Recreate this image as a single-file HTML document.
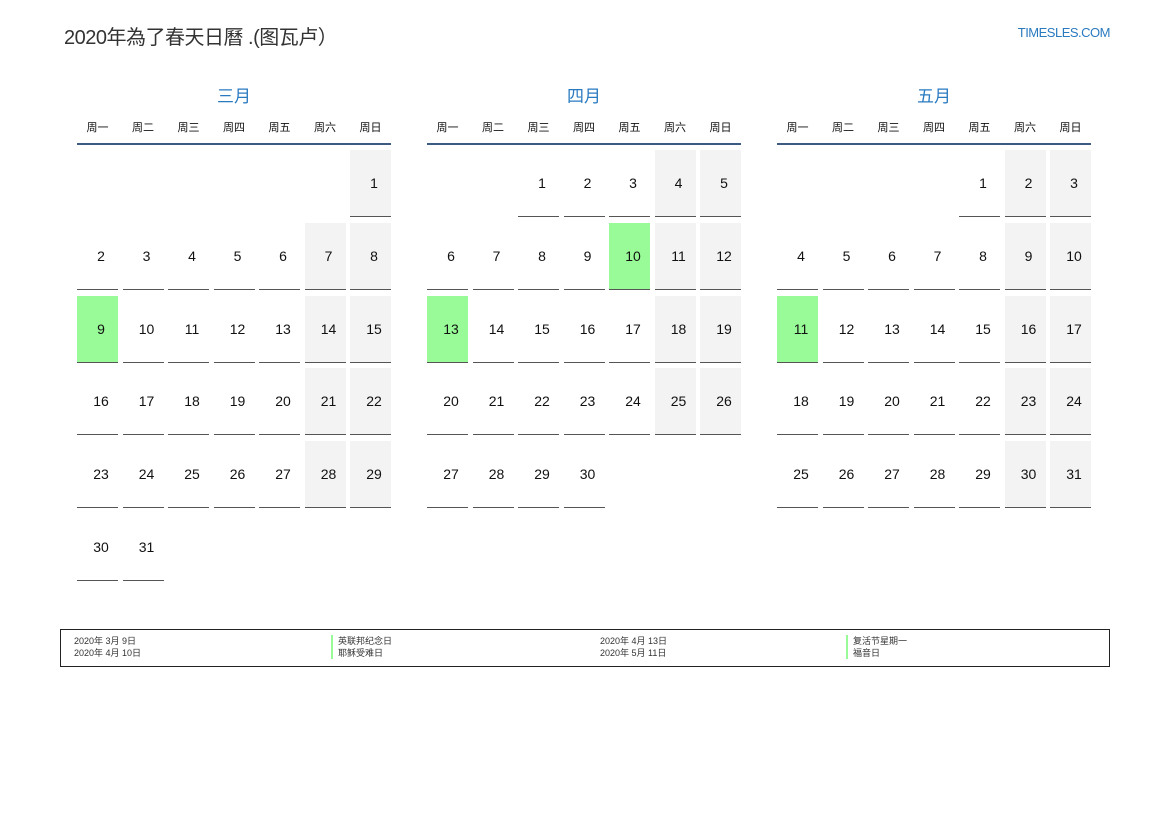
<!DOCTYPE html>
<html><head><meta charset="utf-8"><style>
*{margin:0;padding:0;box-sizing:border-box}
body{width:1169px;height:827px;background:#fff;position:relative;font-family:"Liberation Sans","Noto Sans CJK SC",sans-serif;color:#222;overflow:hidden}
.title{position:absolute;left:64px;top:21px;font-size:20px;color:#333;letter-spacing:-0.5px}
.site{position:absolute;right:59px;top:25px;font-size:13px;color:#2a7ac0;letter-spacing:-0.5px}
.m{position:absolute;top:85px;width:314px}
.mt{text-align:center;font-size:17px;color:#2a7ac0;height:24px;line-height:24px}
.wd{display:grid;grid-template-columns:repeat(7,41px);column-gap:4.5px;margin-top:9px;font-size:11px;text-align:center;height:25px;line-height:20px;color:#111}
.hl{height:2px;background:#3d5a80;margin-top:0px}
.g{display:grid;grid-template-columns:repeat(7,41px);grid-auto-rows:67px;column-gap:4.5px;row-gap:5.8px;margin-top:5px}
.g div{font-size:14px;text-align:center;line-height:66px;border-bottom:1px solid #555;color:#111;padding-left:7px}
.g div.e{border:none}
.g div.w{background:#f3f3f3}
.g div.h{background:#98fb98}
.leg{position:absolute;left:60px;top:629px;width:1050px;height:38px;border:1px solid #222;font-size:9px;color:#333}
.leg span{position:absolute;line-height:12px}
.bar{border-left:2px solid #98fb98;padding-left:5px}
</style></head><body>
<div class="title">2020年為了春天日曆 .(图瓦卢）</div>
<div class="site">TIMESLES.COM</div>

<div class="m" style="left:77px"><div class="mt">三月</div>
<div class="wd"><span>周一</span><span>周二</span><span>周三</span><span>周四</span><span>周五</span><span>周六</span><span>周日</span></div><div class="hl"></div>
<div class="g">
<div class="e"></div><div class="e"></div><div class="e"></div><div class="e"></div><div class="e"></div><div class="e"></div><div class="w">1</div>
<div>2</div><div>3</div><div>4</div><div>5</div><div>6</div><div class="w">7</div><div class="w">8</div>
<div class="h">9</div><div>10</div><div>11</div><div>12</div><div>13</div><div class="w">14</div><div class="w">15</div>
<div>16</div><div>17</div><div>18</div><div>19</div><div>20</div><div class="w">21</div><div class="w">22</div>
<div>23</div><div>24</div><div>25</div><div>26</div><div>27</div><div class="w">28</div><div class="w">29</div>
<div>30</div><div>31</div>
</div></div>

<div class="m" style="left:427px"><div class="mt">四月</div>
<div class="wd"><span>周一</span><span>周二</span><span>周三</span><span>周四</span><span>周五</span><span>周六</span><span>周日</span></div><div class="hl"></div>
<div class="g">
<div class="e"></div><div class="e"></div><div>1</div><div>2</div><div>3</div><div class="w">4</div><div class="w">5</div>
<div>6</div><div>7</div><div>8</div><div>9</div><div class="h">10</div><div class="w">11</div><div class="w">12</div>
<div class="h">13</div><div>14</div><div>15</div><div>16</div><div>17</div><div class="w">18</div><div class="w">19</div>
<div>20</div><div>21</div><div>22</div><div>23</div><div>24</div><div class="w">25</div><div class="w">26</div>
<div>27</div><div>28</div><div>29</div><div>30</div>
</div></div>

<div class="m" style="left:777px"><div class="mt">五月</div>
<div class="wd"><span>周一</span><span>周二</span><span>周三</span><span>周四</span><span>周五</span><span>周六</span><span>周日</span></div><div class="hl"></div>
<div class="g">
<div class="e"></div><div class="e"></div><div class="e"></div><div class="e"></div><div>1</div><div class="w">2</div><div class="w">3</div>
<div>4</div><div>5</div><div>6</div><div>7</div><div>8</div><div class="w">9</div><div class="w">10</div>
<div class="h">11</div><div>12</div><div>13</div><div>14</div><div>15</div><div class="w">16</div><div class="w">17</div>
<div>18</div><div>19</div><div>20</div><div>21</div><div>22</div><div class="w">23</div><div class="w">24</div>
<div>25</div><div>26</div><div>27</div><div>28</div><div>29</div><div class="w">30</div><div class="w">31</div>
</div></div>

<div class="leg">
<span style="left:13px;top:5px">2020年 3月 9日</span>
<span style="left:13px;top:17px">2020年 4月 10日</span>
<span class="bar" style="left:270px;top:5px">英联邦纪念日</span>
<span class="bar" style="left:270px;top:17px">耶稣受难日</span>
<span style="left:539px;top:5px">2020年 4月 13日</span>
<span style="left:539px;top:17px">2020年 5月 11日</span>
<span class="bar" style="left:785px;top:5px">复活节星期一</span>
<span class="bar" style="left:785px;top:17px">福音日</span>
</div>
</body></html>
